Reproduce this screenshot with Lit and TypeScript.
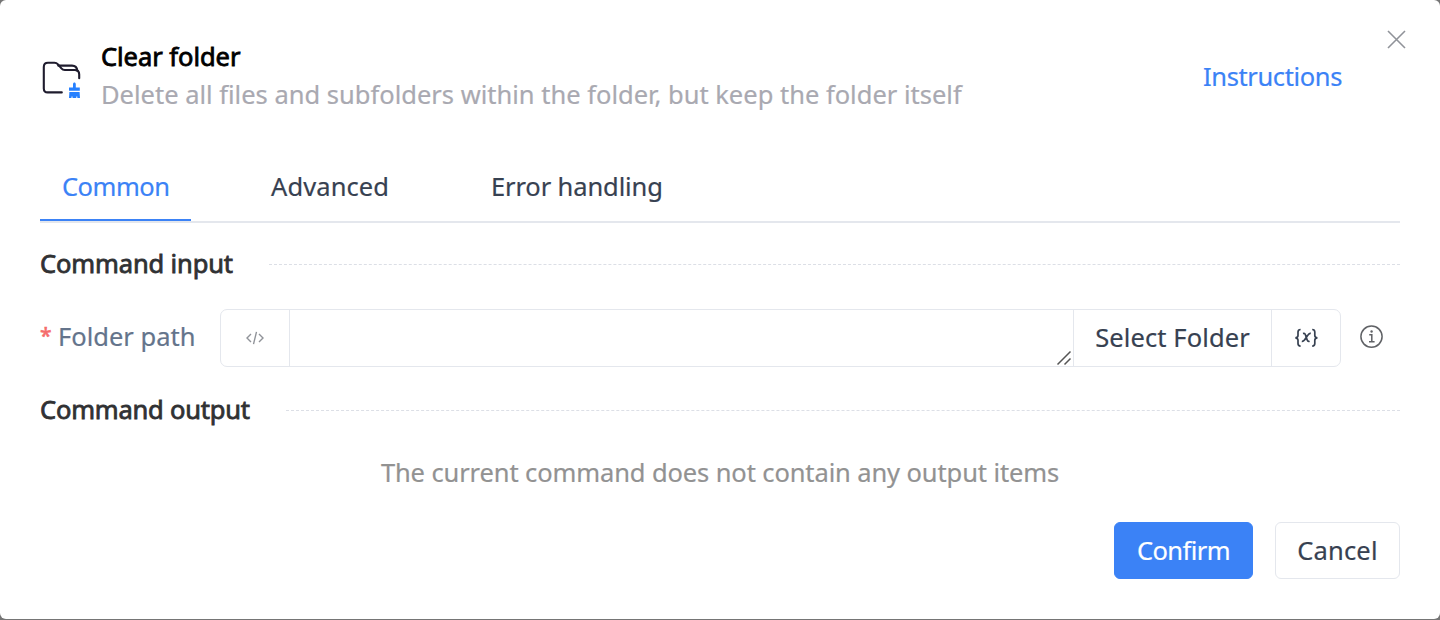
import { LitElement, html, css, svg } from "lit";
import { customElement, state } from "lit/decorators.js";

@customElement("app-root")
export class AppRoot extends LitElement {
  @state() private tab = 0;

  static styles = css`
    :host { display: block; height: 620px; overflow: hidden; background: #757575;
      font-family: "Noto Sans", "Open Sans", sans-serif; font-size: 25.5px; line-height: 38px; color: #374151; }
    * { box-sizing: border-box; }
    svg { display: block; flex: none; }
    .dialog { height: 619px; background: #fff; border-radius: 6px; padding: 0 40px; display: flex; flex-direction: column; white-space: nowrap; position: relative; -webkit-text-stroke: 0.2px currentColor; }
    .close { position: absolute; left: 1387px; top: 30px; }
    .header { height: 153px; padding-top: 37px; display: flex; align-items: flex-start; }
    .logo { margin: 22px 18px 0 1px; }
    .titles { flex: 1; }
    .title { color: #000; -webkit-text-stroke: 0.8px #000; letter-spacing: -0.04px; }
    .desc { color: #a9a9b1; letter-spacing: 0; }
    .link { color: #3b82f6; margin: 20px 58px 0 0; letter-spacing: -0.38px; }
    .tabs { height: 70px; display: flex; border-bottom: 2px solid #e4e7ed; }
    .tab { height: 68px; padding: 14px 22px 0; margin-right: 58px; }
    .tab.on { color: #3b82f6; border-bottom: 2px solid #3b82f6; }
    .t0 { width: 151px; letter-spacing: -0.5px; }
    .t1 { width: 162px; letter-spacing: 0.1px; }
    .t2 { letter-spacing: -0.12px; }
    .section { display: flex; align-items: center; height: 38px; color: #303133; }
    .section.in { margin-top: 22px; letter-spacing: -0.13px; }
    .section.out { margin-top: 24px; letter-spacing: -0.2px; }
    .name { -webkit-text-stroke: 0.8px #303133; margin-top: -2px; }
    .rule { flex: 1; height: 0; border-top: 1px dashed #dcdfe6; margin-left: 36px; }
    .row { display: flex; margin-top: 26px; height: 58px; align-items: center; }
    .label { width: 180px; display: flex; color: #64748b; margin-top: -4px; }
    .star { color: #f56c6c; width: 18px; font-size: 21px; line-height: 36px; -webkit-text-stroke: 0.6px #f56c6c; }
    .group { width: 1121px; height: 58px; border: 1px solid #e4e7ed; border-radius: 7px; display: flex; }
    .cell { display: flex; align-items: center; justify-content: center; border-left: 1px solid #e4e7ed; }
    .cell.code { width: 68px; border-left: 0; }
    .cell.input { flex: 1; align-items: flex-end; justify-content: flex-end; }
    .cell.pick { width: 198px; letter-spacing: 0.1px; padding-bottom: 2px; }
    .cell.var { width: 69px; }
    .info { margin: -2px 0 0 19px; }
    .empty { text-align: center; color: #929292; margin-top: 24px; letter-spacing: -0.11px; }
    .footer { display: flex; justify-content: flex-end; gap: 22px; margin-top: 31px; }
    .btn { height: 57px; border-radius: 6px; display: flex; align-items: center; justify-content: center; border: 1px solid #e4e7ed; padding-bottom: 2px; }
    .primary { width: 139px; background: #3b82f6; border-color: #3b82f6; color: #fff; letter-spacing: -0.55px; }
    .plain { width: 125px; letter-spacing: 0.15px; }
  `;

  private folder = svg`<svg class="logo" width="42" height="42" viewBox="0 0 42 42" fill="none">
    <path d="M20.8 33.4H6.6C4.2 33.4 2.8 32 2.8 29.6V8C2.8 5 4.2 3.7 7 3.7H13.5C15 3.7 15.9 4.2 17 5.4L20.4 9.4C21.3 10.5 22.2 11 23.8 11H33.5C36.8 11 38.2 12.6 38.2 15.4V19.2" stroke="#1f1c2e" stroke-width="2.1" stroke-linecap="round" stroke-linejoin="round"/>
    <path d="M17.2 6.6H31C34.4 6.6 36 8.2 36.4 11.8" stroke="#1f1c2e" stroke-width="2.1" stroke-linecap="round"/>
    <path d="M32 25.2c0-2.2 2.8-2.2 2.8 0v3.4h4v3.2H28v-3.2h4zM28.4 33.1h10.2l.4 5.9h-2.7v-1.5h-1V39h-3.8v-1.5h-1V39H28z" fill="#2680ff"/>
  </svg>`;

  render() {
    const labels = ["Common", "Advanced", "Error handling"];
    return html`<div class="dialog">
      <svg class="close" width="19" height="19" viewBox="0 0 19 19" fill="none" stroke="#909399" stroke-width="1.6"><path d="M1 1L18 18M18 1L1 18"/></svg>
      <div class="header">
        ${this.folder}
        <div class="titles">
          <div class="title"><span>Clear folder</span></div>
          <div class="desc"><span>Delete all files and subfolders within the folder, but keep the folder itself</span></div>
        </div>
        <div class="link">Instructions</div>
      </div>
      <div class="tabs">
        ${labels.map((l, i) => html`<div class="tab t${i} ${this.tab === i ? "on" : ""}" @click=${() => (this.tab = i)}><span>${l}</span></div>`)}
      </div>
      <div class="section in"><span class="name">Command input</span><div class="rule"></div></div>
      <div class="row">
        <div class="label"><span class="star">*</span><span class="path">Folder path</span></div>
        <div class="group">
          <div class="cell code"><svg width="18" height="14" viewBox="0 0 18 14" fill="none" stroke="#909399" stroke-width="1.4"><path d="M5 3L1 7l4 4M13 3l4 4-4 4M10.5 .8L7.5 13.2"/></svg></div>
          <div class="cell input"><svg width="17" height="16" viewBox="0 0 17 16" fill="none" stroke="#555" stroke-width="1.5"><path d="M1.5 14.5L14.5 1.5M8.5 14.5L14.5 8.5"/></svg></div>
          <div class="cell pick"><span>Select Folder</span></div>
          <div class="cell var"><svg width="24" height="20" viewBox="0 0 24 20" fill="none" stroke="#374151" stroke-width="1.7"><path d="M6.6 1.5C4.4 1.5 4 2.3 4 4V7.4C4 9 3.2 9.6 1.4 9.8C3.2 10 4 10.6 4 12.2V15.6C4 17.3 4.4 18.1 6.6 18.1M18.2 1.5C20.4 1.5 20.8 2.3 20.8 4V7.4C20.8 9 21.6 9.6 23.4 9.8C21.6 10 20.8 10.6 20.8 12.2V15.6C20.8 17.3 20.4 18.1 18.2 18.1"/><path d="M9 5.6C10.2 5.2 11 5.6 11.4 6.8L13.2 12C13.6 13.2 14.4 13.6 15.6 13.2M16.8 5.4C15.2 5 14.4 6 12.4 9.2C10.4 12.4 9.6 13.8 7.8 13.4"/></svg></div>
        </div>
        <svg class="info" width="24" height="24" viewBox="0 0 24 24" fill="none" stroke="#606266" stroke-width="1.5"><circle cx="11.5" cy="11.6" r="10.6"/><path d="M9.2 9.8H11.8V16.6M9 16.8H14.6"/><circle cx="11.6" cy="6.5" r="1.2" fill="#606266" stroke="none"/></svg>
      </div>
      <div class="section out"><span class="name">Command output</span><div class="rule"></div></div>
      <div class="empty"><span>The current command does not contain any output items</span></div>
      <div class="footer">
        <div class="btn primary"><span>Confirm</span></div>
        <div class="btn plain"><span>Cancel</span></div>
      </div>
    </div>`;
  }
}
